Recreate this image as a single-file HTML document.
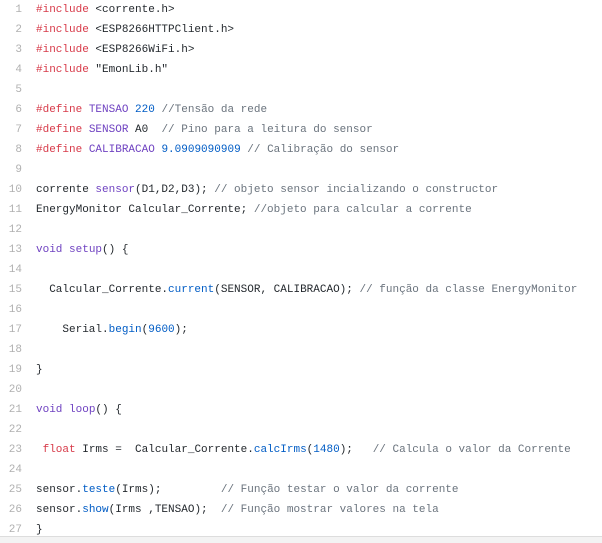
<!DOCTYPE html>
<html><head><meta charset="utf-8"><style>
body{margin:0;background:#fff;width:602px;height:542px;overflow:hidden;position:relative}
.l{position:absolute;left:0;height:20px;line-height:20px;font-family:"Liberation Mono",monospace;font-size:11px;color:#24292e;white-space:pre}
.n{position:absolute;left:0;width:22px;text-align:right;color:#b0b0b0}
.c{position:absolute;left:36px}
.k{color:#d73a49}.p{color:#6f42c1}.b{color:#005cc5}.g{color:#6a737d}
.bot{position:absolute;left:0;right:0;top:536px;height:6px;background:#f3f3f3;border-top:1px solid #ddd}
</style></head><body>
<div class="l" style="top:0"><span class="n">1</span><span class="c"><span class="k">#include</span> &lt;corrente.h&gt;</span></div>
<div class="l" style="top:20px"><span class="n">2</span><span class="c"><span class="k">#include</span> &lt;ESP8266HTTPClient.h&gt;</span></div>
<div class="l" style="top:40px"><span class="n">3</span><span class="c"><span class="k">#include</span> &lt;ESP8266WiFi.h&gt;</span></div>
<div class="l" style="top:60px"><span class="n">4</span><span class="c"><span class="k">#include</span> "EmonLib.h"</span></div>
<div class="l" style="top:80px"><span class="n">5</span></div>
<div class="l" style="top:100px"><span class="n">6</span><span class="c"><span class="k">#define</span> <span class="p">TENSAO</span> <span class="b">220</span> <span class="g">//Tensão da rede</span></span></div>
<div class="l" style="top:120px"><span class="n">7</span><span class="c"><span class="k">#define</span> <span class="p">SENSOR</span> A0  <span class="g">// Pino para a leitura do sensor</span></span></div>
<div class="l" style="top:140px"><span class="n">8</span><span class="c"><span class="k">#define</span> <span class="p">CALIBRACAO</span> <span class="b">9.0909090909</span> <span class="g">// Calibração do sensor</span></span></div>
<div class="l" style="top:160px"><span class="n">9</span></div>
<div class="l" style="top:180px"><span class="n">10</span><span class="c">corrente <span class="p">sensor</span>(D1,D2,D3); <span class="g">// objeto sensor incializando o constructor</span></span></div>
<div class="l" style="top:200px"><span class="n">11</span><span class="c">EnergyMonitor Calcular_Corrente; <span class="g">//objeto para calcular a corrente</span></span></div>
<div class="l" style="top:220px"><span class="n">12</span></div>
<div class="l" style="top:240px"><span class="n">13</span><span class="c"><span class="p">void</span> <span class="p">setup</span>() {</span></div>
<div class="l" style="top:260px"><span class="n">14</span></div>
<div class="l" style="top:280px"><span class="n">15</span><span class="c">  Calcular_Corrente.<span class="b">current</span>(SENSOR, CALIBRACAO); <span class="g">// função da classe EnergyMonitor</span></span></div>
<div class="l" style="top:300px"><span class="n">16</span></div>
<div class="l" style="top:320px"><span class="n">17</span><span class="c">    Serial.<span class="b">begin</span>(<span class="b">9600</span>);</span></div>
<div class="l" style="top:340px"><span class="n">18</span></div>
<div class="l" style="top:360px"><span class="n">19</span><span class="c">}</span></div>
<div class="l" style="top:380px"><span class="n">20</span></div>
<div class="l" style="top:400px"><span class="n">21</span><span class="c"><span class="p">void</span> <span class="p">loop</span>() {</span></div>
<div class="l" style="top:420px"><span class="n">22</span></div>
<div class="l" style="top:440px"><span class="n">23</span><span class="c"> <span class="k">float</span> Irms =  Calcular_Corrente.<span class="b">calcIrms</span>(<span class="b">1480</span>);   <span class="g">// Calcula o valor da Corrente</span></span></div>
<div class="l" style="top:460px"><span class="n">24</span></div>
<div class="l" style="top:480px"><span class="n">25</span><span class="c">sensor.<span class="b">teste</span>(Irms);         <span class="g">// Função testar o valor da corrente</span></span></div>
<div class="l" style="top:500px"><span class="n">26</span><span class="c">sensor.<span class="b">show</span>(Irms ,TENSAO);  <span class="g">// Função mostrar valores na tela</span></span></div>
<div class="l" style="top:520px"><span class="n">27</span><span class="c">}</span></div>
<div class="bot"></div>
</body></html>
